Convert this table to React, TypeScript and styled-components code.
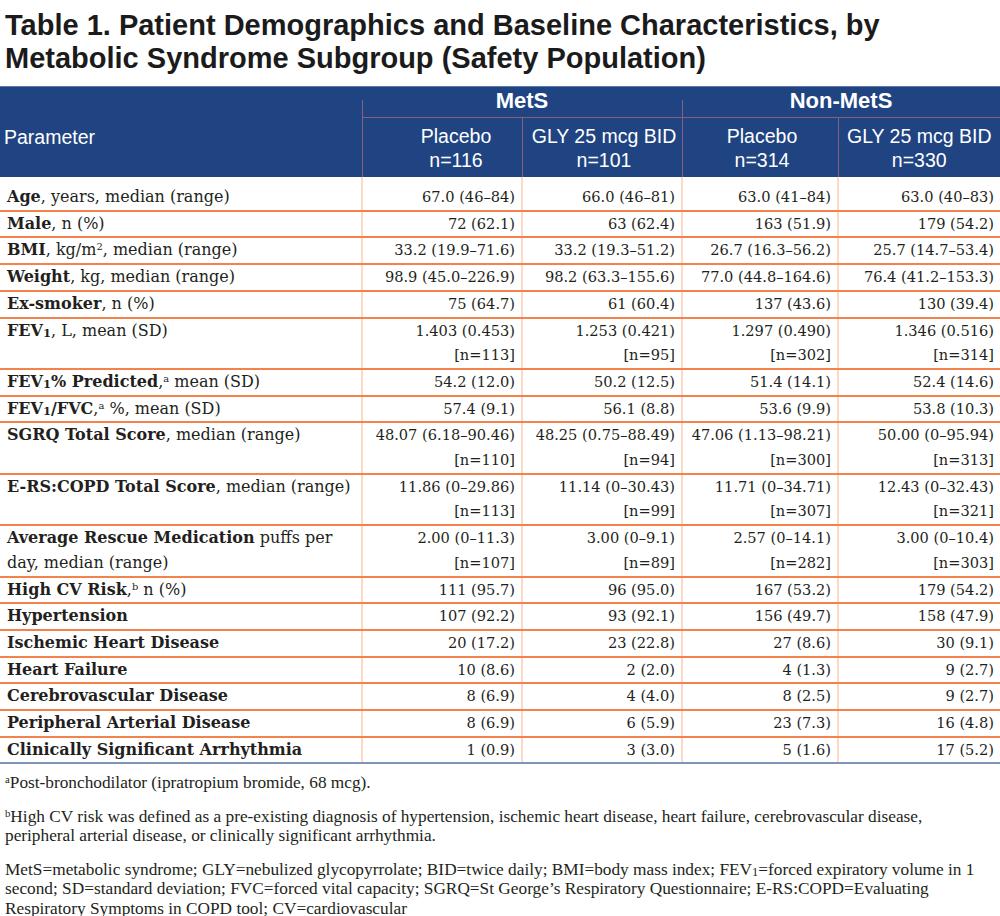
import React from "react";
import styled, { createGlobalStyle } from "styled-components";

const GlobalStyle = createGlobalStyle`
  html, body { margin: 0; padding: 0; background: #ffffff; }
  body { font-family: "Liberation Sans", Arial, sans-serif; color: #231f20; }
`;

const Page = styled.div`
  width: 1000px;
  background: #ffffff;
`;

const Title = styled.h1`
  margin: 0;
  padding: 9px 0 0 5px;
  height: 86px;
  box-sizing: border-box;
  font-family: "Liberation Sans", Arial, sans-serif;
  font-weight: 700;
  font-size: 29px;
  line-height: 33px;
  color: #1b1b1b;
  white-space: nowrap;
`;

const Table = styled.table`
  width: 1000px;
  border-collapse: collapse;
  table-layout: fixed;
`;

const HeadGroup = styled.thead`
  background: #1f4481;
  color: #ffffff;
  font-family: "Liberation Sans", Arial, sans-serif;
`;

const SEP = "#86607f";

const ParamTh = styled.th`
  text-align: left;
  vertical-align: middle;
  font-weight: 400;
  font-size: 19.5px;
  padding: 10px 4px 0;
  border-top: 1px solid #5c79ad;
`;

const GroupTh = styled.th<{ $divider?: boolean }>`
  padding: 3px 0 5px;
  font-weight: 700;
  font-size: 22px;
  line-height: 22px;
  vertical-align: top;
  text-align: center;
  border-top: 1px solid #5c79ad;
  border-bottom: 1px solid ${SEP};
  background-image: ${(p) =>
    p.$divider ? `linear-gradient(${SEP}, ${SEP})` : "none"};
  background-repeat: no-repeat;
  background-size: 1px calc(100% - 13px);
  background-position: left bottom;
`;

const SubTh = styled.th<{ $shift?: number }>`
  padding: 6px 0 5px ${(p) => p.$shift ?? 0}px;
  font-weight: 400;
  font-size: 19.5px;
  line-height: 24px;
  text-align: center;
  vertical-align: top;
  border-left: 1px solid ${SEP};
`;

const Body = styled.tbody`
  font-family: "DejaVu Serif", "Liberation Serif", serif;
  color: #231f20;
`;

const Row = styled.tr<{ $first?: boolean; $last?: boolean }>`
  & > td {
    padding-top: ${(p) => (p.$first ? "8px" : "0")};
    border-bottom: ${(p) =>
      p.$last ? "2px solid #8096b9" : "2px solid #f3834a"};
  }
`;

const LabelCell = styled.td`
  padding-left: 7px;
  padding-right: 4px;
  padding-bottom: 0;
  font-size: 16px;
  line-height: 24.7px;
  vertical-align: baseline;
  text-align: left;
  white-space: nowrap;
`;

const ValueCell = styled.td`
  padding-left: 0;
  padding-right: 6px;
  padding-bottom: 0;
  font-size: 14.6px;
  line-height: 24.7px;
  vertical-align: baseline;
  text-align: right;
  white-space: nowrap;
  border-left: 2px solid #fcdac6;
`;

const Sub = styled.sub`
  font-size: 0.72em;
  vertical-align: -0.05em;
  line-height: 0;
`;

const Sup = styled.sup`
  font-size: 0.62em;
  vertical-align: 0.55em;
  line-height: 0;
  font-weight: 400;
`;

const Notes = styled.div`
  padding: 9px 5px 0 5px;
  font-family: "Liberation Serif", "Times New Roman", serif;
  font-size: 17.3px;
  line-height: 19.5px;
  color: #231f20;
`;

const Note = styled.p`
  margin: 0 0 14px 0;
  white-space: nowrap;
  &:last-child { margin-bottom: 0; }
`;

const NoteSup = styled.sup`
  font-size: 0.62em;
  vertical-align: 0.45em;
  line-height: 0;
`;

type RowData = {
  label: React.ReactNode;
  values: React.ReactNode[];
};

const FEV = () => (
  <>
    FEV<Sub>1</Sub>
  </>
);

const two = (a: string, b: string) => (
  <>
    {a}
    <br />
    {b}
  </>
);

const rows: RowData[] = [
  {
    label: (
      <>
        <b>Age</b>, years, median (range)
      </>
    ),
    values: ["67.0 (46–84)", "66.0 (46–81)", "63.0 (41–84)", "63.0 (40–83)"],
  },
  {
    label: (
      <>
        <b>Male</b>, n (%)
      </>
    ),
    values: ["72 (62.1)", "63 (62.4)", "163 (51.9)", "179 (54.2)"],
  },
  {
    label: (
      <>
        <b>BMI</b>, kg/m<Sup>2</Sup>, median (range)
      </>
    ),
    values: [
      "33.2 (19.9–71.6)",
      "33.2 (19.3–51.2)",
      "26.7 (16.3–56.2)",
      "25.7 (14.7–53.4)",
    ],
  },
  {
    label: (
      <>
        <b>Weight</b>, kg, median (range)
      </>
    ),
    values: [
      "98.9 (45.0–226.9)",
      "98.2 (63.3–155.6)",
      "77.0 (44.8–164.6)",
      "76.4 (41.2–153.3)",
    ],
  },
  {
    label: (
      <>
        <b>Ex-smoker</b>, n (%)
      </>
    ),
    values: ["75 (64.7)", "61 (60.4)", "137 (43.6)", "130 (39.4)"],
  },
  {
    label: (
      <>
        <b>
          <FEV />
        </b>
        , L, mean (SD)
      </>
    ),
    values: [
      two("1.403 (0.453)", "[n=113]"),
      two("1.253 (0.421)", "[n=95]"),
      two("1.297 (0.490)", "[n=302]"),
      two("1.346 (0.516)", "[n=314]"),
    ],
  },
  {
    label: (
      <>
        <b>
          <FEV />% Predicted
        </b>
        ,<Sup>a</Sup> mean (SD)
      </>
    ),
    values: ["54.2 (12.0)", "50.2 (12.5)", "51.4 (14.1)", "52.4 (14.6)"],
  },
  {
    label: (
      <>
        <b>
          <FEV />
          /FVC
        </b>
        ,<Sup>a</Sup> %, mean (SD)
      </>
    ),
    values: ["57.4 (9.1)", "56.1 (8.8)", "53.6 (9.9)", "53.8 (10.3)"],
  },
  {
    label: (
      <>
        <b>SGRQ Total Score</b>, median (range)
      </>
    ),
    values: [
      two("48.07 (6.18–90.46)", "[n=110]"),
      two("48.25 (0.75–88.49)", "[n=94]"),
      two("47.06 (1.13–98.21)", "[n=300]"),
      two("50.00 (0–95.94)", "[n=313]"),
    ],
  },
  {
    label: (
      <>
        <b>E-RS:COPD Total Score</b>, median (range)
      </>
    ),
    values: [
      two("11.86 (0–29.86)", "[n=113]"),
      two("11.14 (0–30.43)", "[n=99]"),
      two("11.71 (0–34.71)", "[n=307]"),
      two("12.43 (0–32.43)", "[n=321]"),
    ],
  },
  {
    label: (
      <>
        <b>Average Rescue Medication</b> puffs per
        <br />
        day, median (range)
      </>
    ),
    values: [
      two("2.00 (0–11.3)", "[n=107]"),
      two("3.00 (0–9.1)", "[n=89]"),
      two("2.57 (0–14.1)", "[n=282]"),
      two("3.00 (0–10.4)", "[n=303]"),
    ],
  },
  {
    label: (
      <>
        <b>High CV Risk</b>,<Sup>b</Sup> n (%)
      </>
    ),
    values: ["111 (95.7)", "96 (95.0)", "167 (53.2)", "179 (54.2)"],
  },
  {
    label: <b>Hypertension</b>,
    values: ["107 (92.2)", "93 (92.1)", "156 (49.7)", "158 (47.9)"],
  },
  {
    label: <b>Ischemic Heart Disease</b>,
    values: ["20 (17.2)", "23 (22.8)", "27 (8.6)", "30 (9.1)"],
  },
  {
    label: <b>Heart Failure</b>,
    values: ["10 (8.6)", "2 (2.0)", "4 (1.3)", "9 (2.7)"],
  },
  {
    label: <b>Cerebrovascular Disease</b>,
    values: ["8 (6.9)", "4 (4.0)", "8 (2.5)", "9 (2.7)"],
  },
  {
    label: <b>Peripheral Arterial Disease</b>,
    values: ["8 (6.9)", "6 (5.9)", "23 (7.3)", "16 (4.8)"],
  },
  {
    label: <b>Clinically Significant Arrhythmia</b>,
    values: ["1 (0.9)", "3 (3.0)", "5 (1.6)", "17 (5.2)"],
  },
];

export default function App() {
  return (
    <Page>
      <GlobalStyle />
      <Title>
        Table 1. Patient Demographics and Baseline Characteristics, by
        <br />
        Metabolic Syndrome Subgroup (Safety Population)
      </Title>
      <Table>
        <colgroup>
          <col style={{ width: 362 }} />
          <col style={{ width: 160 }} />
          <col style={{ width: 160 }} />
          <col style={{ width: 156 }} />
          <col style={{ width: 162 }} />
        </colgroup>
        <HeadGroup>
          <tr>
            <ParamTh rowSpan={2}>Parameter</ParamTh>
            <GroupTh colSpan={2} $divider>
              MetS
            </GroupTh>
            <GroupTh colSpan={2} $divider>
              Non-MetS
            </GroupTh>
          </tr>
          <tr>
            <SubTh $shift={28}>
              Placebo
              <br />
              n=116
            </SubTh>
            <SubTh $shift={4}>
              GLY 25 mcg BID
              <br />
              n=101
            </SubTh>
            <SubTh $shift={4}>
              Placebo
              <br />
              n=314
            </SubTh>
            <SubTh>
              GLY 25 mcg BID
              <br />
              n=330
            </SubTh>
          </tr>
        </HeadGroup>
        <Body>
          {rows.map((r, i) => (
            <Row key={i} $first={i === 0} $last={i === rows.length - 1}>
              <LabelCell>{r.label}</LabelCell>
              {r.values.map((v, j) => (
                <ValueCell key={j}>{v}</ValueCell>
              ))}
            </Row>
          ))}
        </Body>
      </Table>
      <Notes>
        <Note>
          <NoteSup>a</NoteSup>Post-bronchodilator (ipratropium bromide, 68
          mcg).
        </Note>
        <Note>
          <NoteSup>b</NoteSup>High CV risk was defined as a pre-existing
          diagnosis of hypertension, ischemic heart disease, heart failure,
          cerebrovascular disease,
          <br />
          peripheral arterial disease, or clinically significant arrhythmia.
        </Note>
        <Note>
          MetS=metabolic syndrome; GLY=nebulized glycopyrrolate; BID=twice
          daily; BMI=body mass index; FEV<Sub>1</Sub>=forced expiratory volume
          in 1
          <br />
          second; SD=standard deviation; FVC=forced vital capacity; SGRQ=St
          George’s Respiratory Questionnaire; E-RS:COPD=Evaluating
          <br />
          Respiratory Symptoms in COPD tool; CV=cardiovascular
        </Note>
      </Notes>
    </Page>
  );
}
